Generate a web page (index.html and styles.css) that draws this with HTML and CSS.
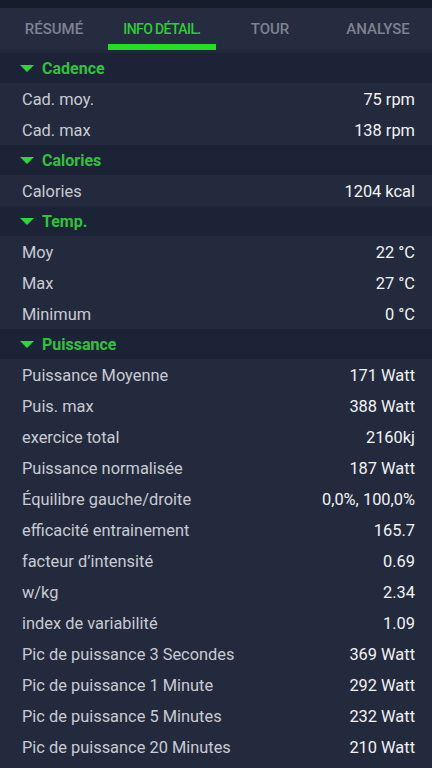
FILE: index.html
```html
<!DOCTYPE html>
<html lang="fr">
<head>
    <meta charset="UTF-8">
    <meta name="viewport" content="width=device-width, initial-scale=1.0">
    <title>Info détail</title>
    <link rel="stylesheet" href="styles.css">
</head>
<body>
    <div class="status-strip"></div>
    <nav class="tabs">
        <div class="tab">Résumé</div>
        <div class="tab active">Info détail.</div>
        <div class="tab">Tour</div>
        <div class="tab">Analyse</div>
    </nav>

    <div class="details">
        <div class="section-title"><span class="arrow"></span>Cadence</div>
        <div class="row"><span class="label">Cad. moy.</span><span class="value">75 rpm</span></div>
        <div class="row"><span class="label">Cad. max</span><span class="value">138 rpm</span></div>

        <div class="section-title"><span class="arrow"></span>Calories</div>
        <div class="row"><span class="label">Calories</span><span class="value">1204 kcal</span></div>

        <div class="section-title"><span class="arrow"></span>Temp.</div>
        <div class="row"><span class="label">Moy</span><span class="value">22 °C</span></div>
        <div class="row"><span class="label">Max</span><span class="value">27 °C</span></div>
        <div class="row"><span class="label">Minimum</span><span class="value">0 °C</span></div>

        <div class="section-title"><span class="arrow"></span>Puissance</div>
        <div class="row"><span class="label">Puissance Moyenne</span><span class="value">171 Watt</span></div>
        <div class="row"><span class="label">Puis. max</span><span class="value">388 Watt</span></div>
        <div class="row"><span class="label">exercice total</span><span class="value">2160kj</span></div>
        <div class="row"><span class="label">Puissance normalisée</span><span class="value">187 Watt</span></div>
        <div class="row"><span class="label">Équilibre gauche/droite</span><span class="value">0,0%, 100,0%</span></div>
        <div class="row"><span class="label">efficacité entrainement</span><span class="value">165.7</span></div>
        <div class="row"><span class="label">facteur d’intensité</span><span class="value">0.69</span></div>
        <div class="row"><span class="label">w/kg</span><span class="value">2.34</span></div>
        <div class="row"><span class="label">index de variabilité</span><span class="value">1.09</span></div>
        <div class="row"><span class="label">Pic de puissance 3 Secondes</span><span class="value">369 Watt</span></div>
        <div class="row"><span class="label">Pic de puissance 1 Minute</span><span class="value">292 Watt</span></div>
        <div class="row"><span class="label">Pic de puissance 5 Minutes</span><span class="value">232 Watt</span></div>
        <div class="row"><span class="label">Pic de puissance 20 Minutes</span><span class="value">210 Watt</span></div>
    </div>
</body>
</html>
```

FILE: styles.css
```css
body {
    font-family: 'Roboto', 'Liberation Sans', sans-serif;
    background-color: #242a3d;
    margin: 0;
    padding: 0;
    overflow: hidden;
}

.status-strip {
    height: 8px;
    background-color: #171c2c;
}

.tabs {
    display: grid;
    grid-template-columns: repeat(4, 1fr);
    height: 42px;
    background-color: #262c3f;
    border-bottom: 3px solid #222839;
}

.tab {
    display: flex;
    justify-content: center;
    padding-top: 12px;
    box-sizing: border-box;
    font-size: 15px;
    font-weight: 500;
    text-transform: uppercase;
    color: #7d8290;
    border-bottom: 6px solid transparent;
}

.tab.active {
    font-size: 14px;
    padding-top: 13px;
    letter-spacing: -0.6px;
    color: #2ecb3c;
    border-bottom-color: #22df24;
}

.section-title {
    display: flex;
    align-items: center;
    height: 30px;
    padding: 1px 0 0 20px;
    box-sizing: border-box;
    background-color: #1c2336;
    color: #2cc43a;
    font-size: 16px;
    font-weight: 700;
}

.arrow {
    width: 0;
    height: 0;
    margin-right: 8px;
    border-left: 7px solid transparent;
    border-right: 7px solid transparent;
    border-top: 7px solid #2ad83a;
}

.row {
    display: flex;
    justify-content: space-between;
    align-items: center;
    height: 31px;
    padding: 1px 17px 0 22px;
    box-sizing: border-box;
    font-size: 16.4px;
    font-weight: 400;
}

.label {
    color: #c8cbd3;
}

.value {
    color: #f1f2f4;
}
```
